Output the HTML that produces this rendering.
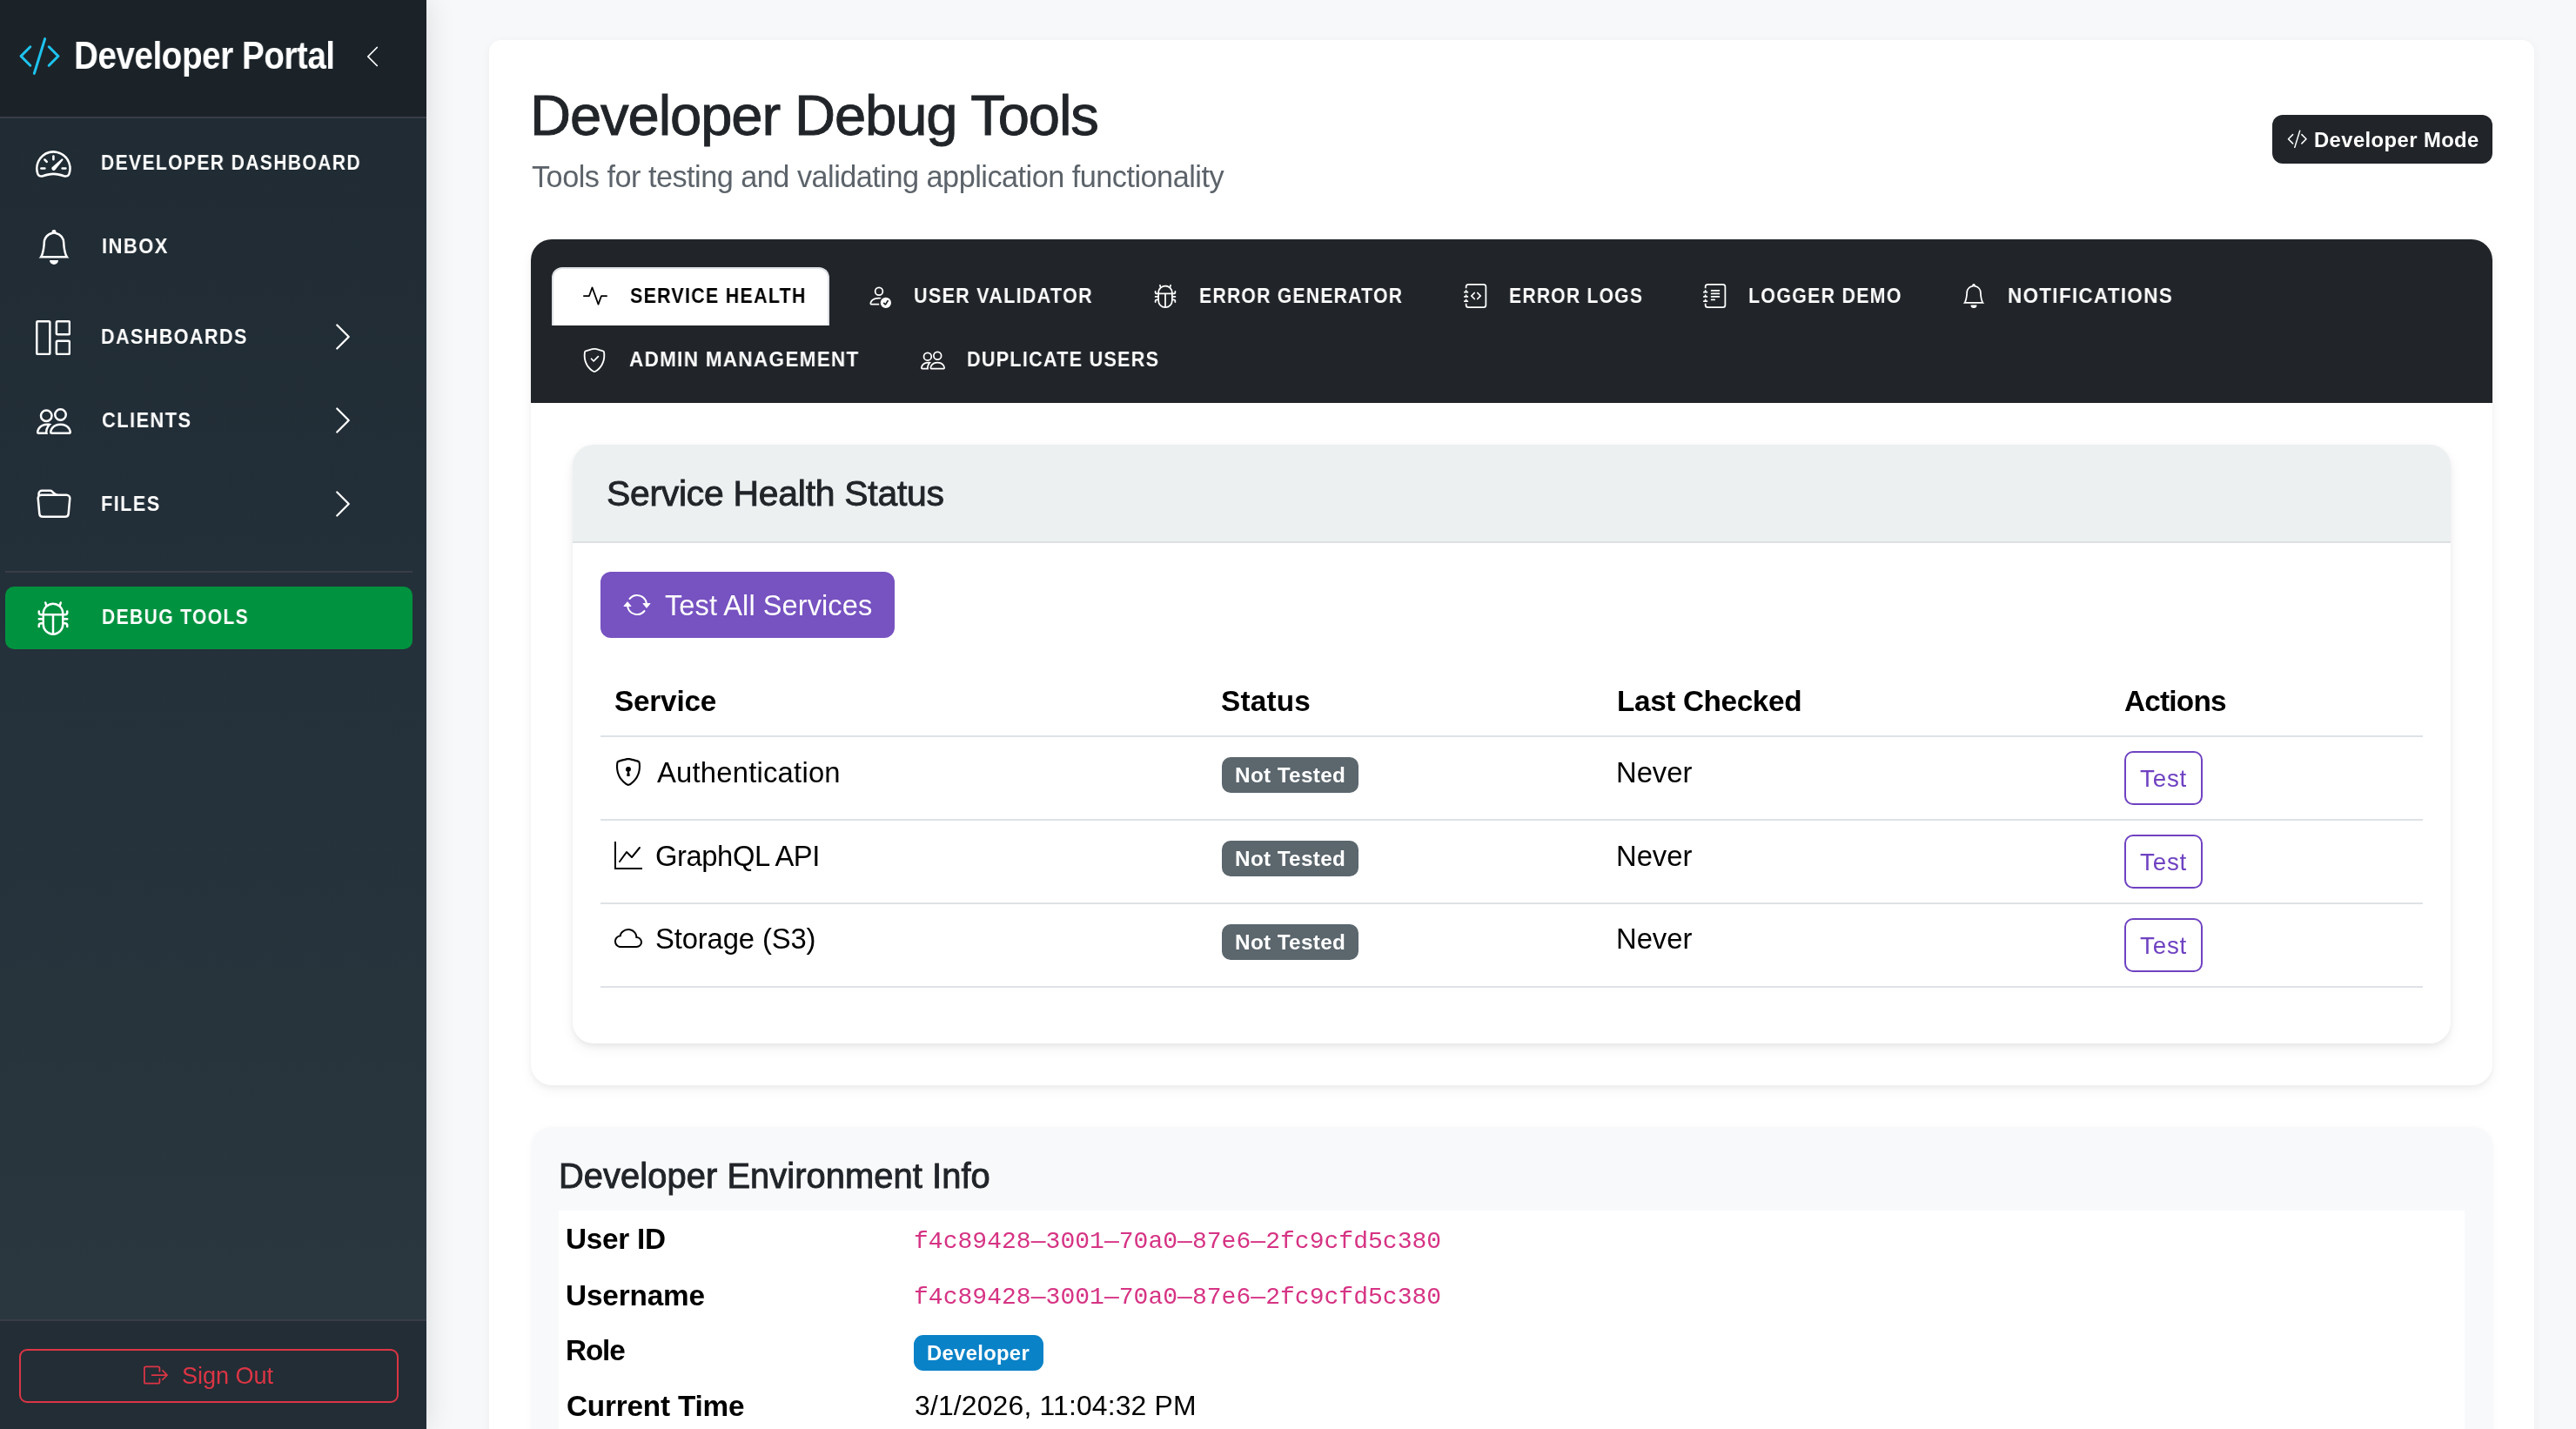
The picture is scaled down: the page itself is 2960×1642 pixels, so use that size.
<!DOCTYPE html><html><head><meta charset="utf-8"><style>
*{margin:0;padding:0;box-sizing:border-box}
html,body{width:2960px;height:1642px;overflow:hidden;background:#f7f8fa}
.t{position:absolute;white-space:nowrap;line-height:1;will-change:transform}
.ic{position:absolute;display:block}
.b{position:absolute}
@media (max-width:1600px){html{zoom:0.5}}
</style></head><body>
<div class="b" style="left:562px;top:46px;width:2350px;height:1700px;background:#fff;border-radius:14px;box-shadow:0 2px 12px rgba(0,0,0,0.045)"></div>
<div class="b" style="left:610px;top:275px;width:2254px;height:972px;background:#fff;border-radius:24px;box-shadow:0 3px 6px rgba(0,0,0,0.05),0 6px 16px rgba(0,0,0,0.04);overflow:hidden"></div>
<div class="b" style="left:610px;top:275px;width:2254px;height:188px;background:#212529;border-radius:24px 24px 0 0"></div>
<div class="b" style="left:634px;top:307px;width:319px;height:67px;background:#fff;border:2px solid #dee2e6;border-bottom:none;border-radius:12px 12px 0 0"></div>
<div class="b" style="left:658px;top:511px;width:2158px;height:688px;background:#fff;border-radius:24px;box-shadow:0 3px 6px rgba(0,0,0,0.06),0 6px 16px rgba(0,0,0,0.05);overflow:hidden"></div>
<div class="b" style="left:658px;top:511px;width:2158px;height:113px;background:#edf0f0;border-radius:24px 24px 0 0;border-bottom:2px solid #dde1e3"></div>
<div class="b" style="left:690px;top:657px;width:338px;height:76px;background:#7752c1;border-radius:12px"></div>
<div class="b" style="left:690px;top:845px;width:2094px;height:2px;background:#dee2e6"></div>
<div class="b" style="left:690px;top:941px;width:2094px;height:2px;background:#dee2e6"></div>
<div class="b" style="left:690px;top:1037px;width:2094px;height:2px;background:#dee2e6"></div>
<div class="b" style="left:690px;top:1133px;width:2094px;height:2px;background:#dee2e6"></div>
<div class="b" style="left:1404px;top:870px;width:157px;height:41px;background:#5b666d;border-radius:10px"></div>
<div class="b" style="left:2441px;top:863px;width:90px;height:62px;border:2px solid #6f42c1;border-radius:10px"></div>
<div class="b" style="left:1404px;top:966px;width:157px;height:41px;background:#5b666d;border-radius:10px"></div>
<div class="b" style="left:2441px;top:959px;width:90px;height:62px;border:2px solid #6f42c1;border-radius:10px"></div>
<div class="b" style="left:1404px;top:1062px;width:157px;height:41px;background:#5b666d;border-radius:10px"></div>
<div class="b" style="left:2441px;top:1055px;width:90px;height:62px;border:2px solid #6f42c1;border-radius:10px"></div>
<div class="b" style="left:610px;top:1295px;width:2255px;height:500px;background:#f8f9fa;border-radius:24px;box-shadow:0 0 6px rgba(0,0,0,0.03)"></div>
<div class="b" style="left:642px;top:1391px;width:2190px;height:400px;background:#fff"></div>
<div class="b" style="left:1050px;top:1534px;width:149px;height:41px;background:#0a82c8;border-radius:11px"></div>
<div class="b" style="left:2611px;top:132px;width:253px;height:56px;background:#212529;border-radius:12px"></div>
<div class="b" style="left:0px;top:0px;width:490px;height:1642px;background:linear-gradient(180deg,#1f2a31 0%,#24303a 45%,#2b373e 92%);box-shadow:3px 0 30px rgba(0,0,0,0.10)"></div>
<div class="b" style="left:0px;top:0px;width:490px;height:134px;background:#1b2329"></div>
<div class="b" style="left:0px;top:134px;width:490px;height:2px;background:#393d47"></div>
<div class="b" style="left:6px;top:656px;width:468px;height:2px;background:#393d47"></div>
<div class="b" style="left:6px;top:674px;width:468px;height:72px;background:#00923f;border-radius:10px"></div>
<div class="b" style="left:0px;top:1517px;width:490px;height:125px;background:#232d35"></div>
<div class="b" style="left:0px;top:1516px;width:490px;height:2px;background:#393d47"></div>
<div class="b" style="left:22px;top:1550px;width:436px;height:62px;border:2px solid #dc3545;border-radius:9px"></div>
<svg class="ic" style="left:21.2px;top:39.5px;width:49px;height:49px" viewBox="0 0 16 16" fill="#1ec3ee"><path d="M10.478 1.647a.5.5 0 1 0-.956-.294l-4 13a.5.5 0 0 0 .956.294zM4.854 4.146a.5.5 0 0 1 0 .708L1.707 8l3.147 3.146a.5.5 0 0 1-.708.708l-3.5-3.5a.5.5 0 0 1 0-.708l3.5-3.5a.5.5 0 0 1 .708 0m6.292 0a.5.5 0 0 0 0 .708L14.293 8l-3.147 3.146a.5.5 0 0 0 .708.708l3.5-3.5a.5.5 0 0 0 0-.708l-3.5-3.5a.5.5 0 0 0-.708 0"/></svg>
<svg class="ic" style="left:414.0px;top:51.0px;width:28px;height:28px" viewBox="0 0 16 16" fill="#fff"><path fill-rule="evenodd" d="M11.354 1.646a.5.5 0 0 1 0 .708L5.707 8l5.647 5.646a.5.5 0 0 1-.708.708l-6-6a.5.5 0 0 1 0-.708l6-6a.5.5 0 0 1 .708 0"/></svg>
<svg class="ic" style="left:41.2px;top:167.8px;width:40.8px;height:40.8px" viewBox="0 0 16 16" fill="#fff"><path d="M8 4a.5.5 0 0 1 .5.5V6a.5.5 0 0 1-1 0V4.5A.5.5 0 0 1 8 4M3.732 5.732a.5.5 0 0 1 .707 0l.915.914a.5.5 0 1 1-.708.708l-.914-.915a.5.5 0 0 1 0-.707M2 10a.5.5 0 0 1 .5-.5h1.586a.5.5 0 0 1 0 1H2.5A.5.5 0 0 1 2 10m9.5 0a.5.5 0 0 1 .5-.5h1.5a.5.5 0 0 1 0 1H12a.5.5 0 0 1-.5-.5m.754-4.246a.39.39 0 0 0-.527-.02L7.547 9.31a.91.91 0 1 0 1.302 1.258l3.434-4.297a.39.39 0 0 0-.029-.518z"/><path fill-rule="evenodd" d="M0 10a8 8 0 1 1 15.547 2.661c-.442 1.253-1.845 1.602-2.932 1.25C11.309 13.488 9.475 13 8 13c-1.474 0-3.31.488-4.615.911-1.087.352-2.49.003-2.932-1.25A8 8 0 0 1 0 10m8-7a7 7 0 0 0-6.603 9.329c.203.575.923.876 1.68.63C4.397 12.533 6.358 12 8 12s3.604.532 4.923.96c.757.245 1.477-.056 1.68-.631A7 7 0 0 0 8 3"/></svg>
<svg class="ic" style="left:42.0px;top:264.0px;width:40px;height:40px" viewBox="0 0 16 16" fill="#fff"><path d="M8 16a2 2 0 0 0 2-2H6a2 2 0 0 0 2 2M8 1.918l-.797.161A4 4 0 0 0 4 6c0 .628-.134 2.197-.459 3.742-.16.767-.376 1.566-.663 2.258h10.244c-.287-.692-.502-1.49-.663-2.258C12.134 8.197 12 6.628 12 6a4 4 0 0 0-3.203-3.92zM14.22 12c.223.447.481.801.78 1H1c.299-.199.557-.553.78-1C2.68 10.2 3 6.88 3 6c0-2.42 1.72-4.44 4.005-4.901a1 1 0 1 1 1.99 0A5 5 0 0 1 13 6c0 .88.32 4.2 1.22 6"/></svg>
<svg class="ic" style="left:41.3px;top:367.8px;width:40.2px;height:40.2px" viewBox="0 0 16 16" fill="#fff"><path d="M6 1H1v14h5zm9 0h-5v5h5zm0 9v5h-5v-5zM0 1a1 1 0 0 1 1-1h5a1 1 0 0 1 1 1v14a1 1 0 0 1-1 1H1a1 1 0 0 1-1-1zm9 0a1 1 0 0 1 1-1h5a1 1 0 0 1 1 1v5a1 1 0 0 1-1 1h-5a1 1 0 0 1-1-1zm1 8a1 1 0 0 0-1 1v5a1 1 0 0 0 1 1h5a1 1 0 0 0 1-1v-5a1 1 0 0 0-1-1z"/></svg>
<svg class="ic" style="left:41.8px;top:464.2px;width:40px;height:40px" viewBox="0 0 16 16" fill="#fff"><path d="M15 14s1 0 1-1-1-4-5-4-5 3-5 4 1 1 1 1zm-7.978-1L7 12.996c.001-.264.167-1.03.76-1.72C8.312 10.629 9.282 10 11 10c1.717 0 2.687.63 3.24 1.276.593.69.758 1.457.76 1.72l-.008.002-.014.002zM11 7a2 2 0 1 0 0-4 2 2 0 0 0 0 4m3-2a3 3 0 1 1-6 0 3 3 0 0 1 6 0M6.936 9.28a6 6 0 0 0-1.23-.247A7 7 0 0 0 5 9c-4 0-5 3-5 4q0 1 1 1h4.216A2.24 2.24 0 0 1 5 13c0-1.01.377-2.042 1.09-2.904.243-.294.526-.569.846-.816M4.92 10A5.5 5.5 0 0 0 4 13H1c0-.26.164-1.03.76-1.724.545-.636 1.492-1.256 3.16-1.275ZM1.5 5.5a3 3 0 1 1 6 0 3 3 0 0 1-6 0m3-2a2 2 0 1 0 0 4 2 2 0 0 0 0-4"/></svg>
<svg class="ic" style="left:41.7px;top:560.0px;width:40px;height:40px" viewBox="0 0 16 16" fill="#fff"><path d="M.54 3.87.5 3a2 2 0 0 1 2-2h3.672a2 2 0 0 1 1.414.586l.828.828A2 2 0 0 0 9.828 3h3.982a2 2 0 0 1 1.992 2.181l-.637 7A2 2 0 0 1 13.174 14H2.826a2 2 0 0 1-1.991-1.819l-.637-7a2 2 0 0 1 .342-1.31zM2.19 4a1 1 0 0 0-.996 1.09l.637 7a1 1 0 0 0 .995.91h10.348a1 1 0 0 0 .995-.91l.637-7A1 1 0 0 0 13.81 4zm4.69-1.707A1 1 0 0 0 6.172 2H2.5a1 1 0 0 0-1 .981l.006.139q.323-.119.684-.12h5.396z"/></svg>
<svg class="ic" style="left:41.3px;top:690.0px;width:40px;height:40px" viewBox="0 0 16 16" fill="#fff"><path d="M4.355.522a.5.5 0 0 1 .623.333l.291.956A5 5 0 0 1 8 1c1.007 0 1.946.298 2.731.811l.29-.956a.5.5 0 1 1 .957.29l-.41 1.352A5 5 0 0 1 13 6h.5a.5.5 0 0 0 .5-.5V5a.5.5 0 0 1 1 0v.5A1.5 1.5 0 0 1 13.5 7H13v1h1.5a.5.5 0 0 1 0 1H13v1h.5a1.5 1.5 0 0 1 1.5 1.5v.5a.5.5 0 1 1-1 0v-.5a.5.5 0 0 0-.5-.5H13a5 5 0 0 1-10 0h-.5a.5.5 0 0 0-.5.5v.5a.5.5 0 1 1-1 0v-.5A1.5 1.5 0 0 1 2.5 10H3V9H1.5a.5.5 0 0 1 0-1H3V7h-.5A1.5 1.5 0 0 1 1 5.5V5a.5.5 0 0 1 1 0v.5a.5.5 0 0 0 .5.5H3c0-1.364.547-2.601 1.432-3.503l-.41-1.352a.5.5 0 0 1 .333-.623M4 7v4a4 4 0 0 0 3.5 3.97V7zm4.5 0v7.97A4 4 0 0 0 12 11V7zM12 6a4 4 0 0 0-1.334-2.982A3.98 3.98 0 0 0 8 2a3.98 3.98 0 0 0-2.667 1.018A4 4 0 0 0 4 6z"/></svg>
<svg class="ic" style="left:375.7px;top:369.4px;width:36px;height:36px" viewBox="0 0 16 16" fill="#fff"><path fill-rule="evenodd" d="M4.646 1.646a.5.5 0 0 1 .708 0l6 6a.5.5 0 0 1 0 .708l-6 6a.5.5 0 0 1-.708-.708L10.293 8 4.646 2.354a.5.5 0 0 1 0-.708"/></svg>
<svg class="ic" style="left:375.7px;top:465.4px;width:36px;height:36px" viewBox="0 0 16 16" fill="#fff"><path fill-rule="evenodd" d="M4.646 1.646a.5.5 0 0 1 .708 0l6 6a.5.5 0 0 1 0 .708l-6 6a.5.5 0 0 1-.708-.708L10.293 8 4.646 2.354a.5.5 0 0 1 0-.708"/></svg>
<svg class="ic" style="left:375.7px;top:561.0px;width:36px;height:36px" viewBox="0 0 16 16" fill="#fff"><path fill-rule="evenodd" d="M4.646 1.646a.5.5 0 0 1 .708 0l6 6a.5.5 0 0 1 0 .708l-6 6a.5.5 0 0 1-.708-.708L10.293 8 4.646 2.354a.5.5 0 0 1 0-.708"/></svg>
<svg class="ic" style="left:165.0px;top:1566.0px;width:28px;height:28px" viewBox="0 0 16 16" fill="#dc3545"><path fill-rule="evenodd" d="M10 12.5a.5.5 0 0 1-.5.5h-8a.5.5 0 0 1-.5-.5v-9a.5.5 0 0 1 .5-.5h8a.5.5 0 0 1 .5.5v2a.5.5 0 0 0 1 0v-2A1.5 1.5 0 0 0 9.5 2h-8A1.5 1.5 0 0 0 0 3.5v9A1.5 1.5 0 0 0 1.5 14h8a1.5 1.5 0 0 0 1.5-1.5v-2a.5.5 0 0 0-1 0z"/><path fill-rule="evenodd" d="M15.854 8.354a.5.5 0 0 0 0-.708l-3-3a.5.5 0 0 0-.708.708L14.293 7.5H5.5a.5.5 0 0 0 0 1h8.793l-2.147 2.146a.5.5 0 0 0 .708.708z"/></svg>
<svg class="ic" style="left:669.6px;top:326.0px;width:28px;height:28px" viewBox="0 0 16 16" fill="#000"><path fill-rule="evenodd" d="M6 2a.5.5 0 0 1 .47.33L10 12.036l1.53-4.208A.5.5 0 0 1 12 7.5h3.5a.5.5 0 0 1 0 1h-3.15l-1.88 5.17a.5.5 0 0 1-.94 0L6 3.964 4.47 8.171A.5.5 0 0 1 4 8.5H.5a.5.5 0 0 1 0-1h3.15l1.88-5.17A.5.5 0 0 1 6 2"/></svg>
<svg class="ic" style="left:996.0px;top:326.0px;width:28px;height:28px" viewBox="0 0 16 16" fill="#fff"><path d="M12.5 16a3.5 3.5 0 1 0 0-7 3.5 3.5 0 0 0 0 7m1.679-4.493-1.335 2.226a.75.75 0 0 1-1.174.144l-.774-.773a.5.5 0 0 1 .708-.708l.547.548 1.170-1.951a.5.5 0 1 1 .858.514M11 5a3 3 0 1 1-6 0 3 3 0 0 1 6 0M8 7a2 2 0 1 0 0-4 2 2 0 0 0 0 4"/><path d="M8.256 14a4.500 4.500 0 0 1-.229-1.004H3c.001-.246.154-.986.832-1.664C4.484 10.680 5.711 10 8 10q.39 0 .74.025c.226-.341.496-.65.804-.918Q8.844 9.002 8 9c-5 0-6 3-6 4s1 1 1 1z"/></svg>
<svg class="ic" style="left:1324.9px;top:326.0px;width:28px;height:28px" viewBox="0 0 16 16" fill="#fff"><path d="M4.355.522a.5.5 0 0 1 .623.333l.291.956A5 5 0 0 1 8 1c1.007 0 1.946.298 2.731.811l.29-.956a.5.5 0 1 1 .957.29l-.41 1.352A5 5 0 0 1 13 6h.5a.5.5 0 0 0 .5-.5V5a.5.5 0 0 1 1 0v.5A1.5 1.5 0 0 1 13.5 7H13v1h1.5a.5.5 0 0 1 0 1H13v1h.5a1.5 1.5 0 0 1 1.5 1.5v.5a.5.5 0 1 1-1 0v-.5a.5.5 0 0 0-.5-.5H13a5 5 0 0 1-10 0h-.5a.5.5 0 0 0-.5.5v.5a.5.5 0 1 1-1 0v-.5A1.5 1.5 0 0 1 2.5 10H3V9H1.5a.5.5 0 0 1 0-1H3V7h-.5A1.5 1.5 0 0 1 1 5.5V5a.5.5 0 0 1 1 0v.5a.5.5 0 0 0 .5.5H3c0-1.364.547-2.601 1.432-3.503l-.41-1.352a.5.5 0 0 1 .333-.623M4 7v4a4 4 0 0 0 3.5 3.97V7zm4.5 0v7.97A4 4 0 0 0 12 11V7zM12 6a4 4 0 0 0-1.334-2.982A3.98 3.98 0 0 0 8 2a3.98 3.98 0 0 0-2.667 1.018A4 4 0 0 0 4 6z"/></svg>
<svg class="ic" style="left:1681.5px;top:326.0px;width:28px;height:28px" viewBox="0 0 16 16" fill="#fff"><path fill-rule="evenodd" d="M8.646 5.646a.5.5 0 0 1 .708 0l2 2a.5.5 0 0 1 0 .708l-2 2a.5.5 0 0 1-.708-.708L10.293 8 8.646 6.354a.5.5 0 0 1 0-.708m-1.292 0a.5.5 0 0 0-.708 0l-2 2a.5.5 0 0 0 0 .708l2 2a.5.5 0 0 0 .708-.708L5.707 8l1.647-1.646a.5.5 0 0 0 0-.708"/><path d="M3 0h10a2 2 0 0 1 2 2v12a2 2 0 0 1-2 2H3a2 2 0 0 1-2-2v-1h1v1a1 1 0 0 0 1 1h10a1 1 0 0 0 1-1V2a1 1 0 0 0-1-1H3a1 1 0 0 0-1 1v1H1V2a2 2 0 0 1 2-2"/><path d="M1 5v-.5a.5.5 0 0 1 1 0V5h.5a.5.5 0 0 1 0 1h-2a.5.5 0 0 1 0-1zm0 3v-.5a.5.5 0 0 1 1 0V8h.5a.5.5 0 0 1 0 1h-2a.5.5 0 0 1 0-1zm0 3v-.5a.5.5 0 0 1 1 0v.5h.5a.5.5 0 0 1 0 1h-2a.5.5 0 0 1 0-1z"/></svg>
<svg class="ic" style="left:1956.5px;top:326.0px;width:28px;height:28px" viewBox="0 0 16 16" fill="#fff"><path d="M5 10.5a.5.5 0 0 1 .5-.5h2a.5.5 0 0 1 0 1h-2a.5.5 0 0 1-.5-.5m0-2a.5.5 0 0 1 .5-.5h5a.5.5 0 0 1 0 1h-5a.5.5 0 0 1-.5-.5m0-2a.5.5 0 0 1 .5-.5h5a.5.5 0 0 1 0 1h-5a.5.5 0 0 1-.5-.5m0-2a.5.5 0 0 1 .5-.5h5a.5.5 0 0 1 0 1h-5a.5.5 0 0 1-.5-.5"/><path d="M3 0h10a2 2 0 0 1 2 2v12a2 2 0 0 1-2 2H3a2 2 0 0 1-2-2v-1h1v1a1 1 0 0 0 1 1h10a1 1 0 0 0 1-1V2a1 1 0 0 0-1-1H3a1 1 0 0 0-1 1v1H1V2a2 2 0 0 1 2-2"/><path d="M1 5v-.5a.5.5 0 0 1 1 0V5h.5a.5.5 0 0 1 0 1h-2a.5.5 0 0 1 0-1zm0 3v-.5a.5.5 0 0 1 1 0V8h.5a.5.5 0 0 1 0 1h-2a.5.5 0 0 1 0-1zm0 3v-.5a.5.5 0 0 1 1 0v.5h.5a.5.5 0 0 1 0 1h-2a.5.5 0 0 1 0-1z"/></svg>
<svg class="ic" style="left:2254.0px;top:326.0px;width:28px;height:28px" viewBox="0 0 16 16" fill="#fff"><path d="M8 16a2 2 0 0 0 2-2H6a2 2 0 0 0 2 2M8 1.918l-.797.161A4 4 0 0 0 4 6c0 .628-.134 2.197-.459 3.742-.16.767-.376 1.566-.663 2.258h10.244c-.287-.692-.502-1.49-.663-2.258C12.134 8.197 12 6.628 12 6a4 4 0 0 0-3.203-3.92zM14.22 12c.223.447.481.801.78 1H1c.299-.199.557-.553.78-1C2.68 10.2 3 6.88 3 6c0-2.42 1.72-4.44 4.005-4.901a1 1 0 1 1 1.99 0A5 5 0 0 1 13 6c0 .88.32 4.2 1.22 6"/></svg>
<svg class="ic" style="left:669.0px;top:400.0px;width:28px;height:28px" viewBox="0 0 16 16" fill="#fff"><path d="M5.338 1.59a61 61 0 0 0-2.837.856.48.48 0 0 0-.328.39c-.554 4.157.726 7.19 2.253 9.188a10.700 10.700 0 0 0 2.287 2.233c.346.244.652.42.893.533q.18.085.293.118a1 1 0 0 0 .101.025 1 1 0 0 0 .1-.025q.114-.034.294-.118c.24-.113.547-.29.893-.533a10.700 10.700 0 0 0 2.287-2.233c1.527-1.997 2.807-5.031 2.253-9.188a.48.48 0 0 0-.328-.39c-.651-.213-1.75-.56-2.837-.855C9.552 1.290 8.531 1.067 8 1.067c-.53 0-1.552.223-2.662.524zM5.072.56C6.157.265 7.31 0 8 0s1.843.265 2.928.56c1.11.3 2.229.655 2.887.87a1.54 1.54 0 0 1 1.044 1.262c.596 4.477-.787 7.795-2.465 9.99a11.800 11.800 0 0 1-2.517 2.453 7 7 0 0 1-1.048.625c-.28.132-.581.24-.829.24s-.548-.108-.829-.24a7 7 0 0 1-1.048-.625 11.800 11.800 0 0 1-2.517-2.453C1.928 10.487.545 7.169 1.141 2.692A1.54 1.54 0 0 1 2.185 1.43 63 63 0 0 1 5.072.56"/><path d="M10.854 5.146a.5.5 0 0 1 0 .708l-3 3a.5.5 0 0 1-.708 0l-1.5-1.5a.5.5 0 1 1 .708-.708L7.5 7.793l2.646-2.647a.5.5 0 0 1 .708 0"/></svg>
<svg class="ic" style="left:1058.0px;top:400.0px;width:28px;height:28px" viewBox="0 0 16 16" fill="#fff"><path d="M15 14s1 0 1-1-1-4-5-4-5 3-5 4 1 1 1 1zm-7.978-1L7 12.996c.001-.264.167-1.03.76-1.72C8.312 10.629 9.282 10 11 10c1.717 0 2.687.63 3.24 1.276.593.69.758 1.457.76 1.72l-.008.002-.014.002zM11 7a2 2 0 1 0 0-4 2 2 0 0 0 0 4m3-2a3 3 0 1 1-6 0 3 3 0 0 1 6 0M6.936 9.28a6 6 0 0 0-1.23-.247A7 7 0 0 0 5 9c-4 0-5 3-5 4q0 1 1 1h4.216A2.24 2.24 0 0 1 5 13c0-1.01.377-2.042 1.09-2.904.243-.294.526-.569.846-.816M4.92 10A5.5 5.5 0 0 0 4 13H1c0-.26.164-1.03.76-1.724.545-.636 1.492-1.256 3.16-1.275ZM1.5 5.5a3 3 0 1 1 6 0 3 3 0 0 1-6 0m3-2a2 2 0 1 0 0 4 2 2 0 0 0 0-4"/></svg>
<svg class="ic" style="left:716.0px;top:679.0px;width:32px;height:32px" viewBox="0 0 16 16" fill="#fff"><path d="M11.534 7h3.932a.25.25 0 0 1 .192.41l-1.966 2.36a.25.25 0 0 1-.384 0l-1.966-2.36a.25.25 0 0 1 .192-.41m-11 2h3.932a.25.25 0 0 0 .192-.41L2.692 6.23a.25.25 0 0 0-.384 0L.342 8.59A.25.25 0 0 0 .534 9"/><path fill-rule="evenodd" d="M8 3c-1.552 0-2.94.707-3.857 1.818a.5.5 0 1 1-.771-.636A6.002 6.002 0 0 1 13.917 7H12.9A5 5 0 0 0 8 3M3.1 9a5.002 5.002 0 0 0 8.757 2.182.5.5 0 1 1 .771.636A6.002 6.002 0 0 1 2.083 9z"/></svg>
<svg class="ic" style="left:2627.8px;top:148.0px;width:23.5px;height:23.5px" viewBox="0 0 16 16" fill="#fff"><path d="M10.478 1.647a.5.5 0 1 0-.956-.294l-4 13a.5.5 0 0 0 .956.294zM4.854 4.146a.5.5 0 0 1 0 .708L1.707 8l3.147 3.146a.5.5 0 0 1-.708.708l-3.5-3.5a.5.5 0 0 1 0-.708l3.5-3.5a.5.5 0 0 1 .708 0m6.292 0a.5.5 0 0 0 0 .708L14.293 8l-3.147 3.146a.5.5 0 0 0 .708.708l3.5-3.5a.5.5 0 0 0 0-.708l-3.5-3.5a.5.5 0 0 0-.708 0"/></svg>
<svg class="ic" style="left:705.8px;top:871.0px;width:32px;height:32px" viewBox="0 0 16 16" fill="#000"><path d="M5.338 1.59a61 61 0 0 0-2.837.856.48.48 0 0 0-.328.39c-.554 4.157.726 7.19 2.253 9.188a10.700 10.700 0 0 0 2.287 2.233c.346.244.652.42.893.533q.18.085.293.118a1 1 0 0 0 .101.025 1 1 0 0 0 .1-.025q.114-.034.294-.118c.24-.113.547-.29.893-.533a10.700 10.700 0 0 0 2.287-2.233c1.527-1.997 2.807-5.031 2.253-9.188a.48.48 0 0 0-.328-.39c-.651-.213-1.75-.56-2.837-.855C9.552 1.290 8.531 1.067 8 1.067c-.53 0-1.552.223-2.662.524zM5.072.56C6.157.265 7.31 0 8 0s1.843.265 2.928.56c1.11.3 2.229.655 2.887.87a1.54 1.54 0 0 1 1.044 1.262c.596 4.477-.787 7.795-2.465 9.99a11.800 11.800 0 0 1-2.517 2.453 7 7 0 0 1-1.048.625c-.28.132-.581.24-.829.24s-.548-.108-.829-.24a7 7 0 0 1-1.048-.625 11.800 11.800 0 0 1-2.517-2.453C1.928 10.487.545 7.169 1.141 2.692A1.54 1.54 0 0 1 2.185 1.43 63 63 0 0 1 5.072.56"/><path d="M9.500 6.500a1.500 1.500 0 0 1-1 1.415l.385 1.990a.5.5 0 0 1-.491.595h-.788a.5.5 0 0 1-.49-.595l.384-1.990a1.500 1.500 0 1 1 2-1.415"/></svg>
<svg class="ic" style="left:706.0px;top:967.0px;width:32px;height:32px" viewBox="0 0 16 16" fill="#000"><path fill-rule="evenodd" d="M0 0h1v15h15v1H0zm14.817 3.113a.5.5 0 0 1 .07.704l-4.5 5.5a.5.5 0 0 1-.74.037L7.06 6.767l-3.656 5.027a.5.5 0 0 1-.808-.588l4-5.5a.5.5 0 0 1 .758-.06l2.609 2.610 4.150-5.073a.5.5 0 0 1 .704-.07"/></svg>
<svg class="ic" style="left:706.0px;top:1063.0px;width:32px;height:32px" viewBox="0 0 16 16" fill="#000"><path d="M4.406 3.342A5.530 5.530 0 0 1 8 2c2.690 0 4.923 2 5.166 4.579C14.758 6.804 16 8.137 16 9.773 16 11.569 14.502 13 12.687 13H3.781C1.708 13 0 11.366 0 9.318c0-1.763 1.266-3.223 2.942-3.593.143-.863.698-1.723 1.464-2.383m.653.757c-.757.653-1.153 1.440-1.153 2.056v.448l-.445.049C2.064 6.805 1 7.952 1 9.318 1 10.785 2.230 12 3.781 12h8.906C13.980 12 15 10.988 15 9.773c0-1.216-1.020-2.228-2.313-2.228h-.5v-.5C12.188 4.825 10.328 3 8 3a4.530 4.530 0 0 0-2.941 1.100z"/></svg>
<div class="t" style="left:85.36px;top:42.09px;font-family:'Liberation Sans';font-weight:700;font-size:43.90px;letter-spacing:-0.500px;color:#ffffff;transform:scaleX(0.8793);transform-origin:0 0;">Developer Portal</div>
<div class="t" style="left:116.05px;top:174.88px;font-family:'Liberation Sans';font-weight:700;font-size:24.00px;letter-spacing:1.600px;color:#ffffff;transform:scaleX(0.8765);transform-origin:0 0;">DEVELOPER DASHBOARD</div>
<div class="t" style="left:116.77px;top:270.60px;font-family:'Liberation Sans';font-weight:700;font-size:24.00px;letter-spacing:1.600px;color:#ffffff;transform:scaleX(0.9129);transform-origin:0 0;">INBOX</div>
<div class="t" style="left:116.41px;top:374.60px;font-family:'Liberation Sans';font-weight:700;font-size:24.00px;letter-spacing:1.600px;color:#ffffff;transform:scaleX(0.8975);transform-origin:0 0;">DASHBOARDS</div>
<div class="t" style="left:117.29px;top:470.60px;font-family:'Liberation Sans';font-weight:700;font-size:24.00px;letter-spacing:1.600px;color:#ffffff;transform:scaleX(0.9087);transform-origin:0 0;">CLIENTS</div>
<div class="t" style="left:116.40px;top:566.60px;font-family:'Liberation Sans';font-weight:700;font-size:24.00px;letter-spacing:1.600px;color:#ffffff;transform:scaleX(0.9020);transform-origin:0 0;">FILES</div>
<div class="t" style="left:117.05px;top:696.80px;font-family:'Liberation Sans';font-weight:700;font-size:24.00px;letter-spacing:1.600px;color:#ffffff;transform:scaleX(0.8757);transform-origin:0 0;">DEBUG TOOLS</div>
<div class="t" style="left:209.20px;top:1566.76px;font-family:'Liberation Sans';font-weight:400;font-size:27.10px;letter-spacing:-0.043px;color:#dc3545;">Sign Out</div>
<div class="t" style="left:609.20px;top:100.28px;font-family:'Liberation Sans';font-weight:400;font-size:65.20px;letter-spacing:-1.130px;color:#212529;-webkit-text-stroke:0.9px #212529;">Developer Debug Tools</div>
<div class="t" style="left:611.00px;top:186.25px;font-family:'Liberation Sans';font-weight:400;font-size:34.30px;letter-spacing:-0.526px;color:#5c636a;">Tools for testing and validating application functionality</div>
<div class="t" style="left:2658.60px;top:148.87px;font-family:'Liberation Sans';font-weight:700;font-size:23.80px;letter-spacing:0.423px;color:#ffffff;">Developer Mode</div>
<div class="t" style="left:724.11px;top:328.12px;font-family:'Liberation Sans';font-weight:700;font-size:24.00px;letter-spacing:1.400px;color:#000;transform:scaleX(0.8938);transform-origin:0 0;">SERVICE HEALTH</div>
<div class="t" style="left:1050.40px;top:328.12px;font-family:'Liberation Sans';font-weight:700;font-size:24.00px;letter-spacing:1.400px;color:#ffffff;transform:scaleX(0.8992);transform-origin:0 0;">USER VALIDATOR</div>
<div class="t" style="left:1378.44px;top:328.12px;font-family:'Liberation Sans';font-weight:700;font-size:24.00px;letter-spacing:1.400px;color:#ffffff;transform:scaleX(0.8823);transform-origin:0 0;">ERROR GENERATOR</div>
<div class="t" style="left:1734.24px;top:328.12px;font-family:'Liberation Sans';font-weight:700;font-size:24.00px;letter-spacing:1.400px;color:#ffffff;transform:scaleX(0.8792);transform-origin:0 0;">ERROR LOGS</div>
<div class="t" style="left:2009.22px;top:328.12px;font-family:'Liberation Sans';font-weight:700;font-size:24.00px;letter-spacing:1.400px;color:#ffffff;transform:scaleX(0.8918);transform-origin:0 0;">LOGGER DEMO</div>
<div class="t" style="left:2307.13px;top:328.12px;font-family:'Liberation Sans';font-weight:700;font-size:24.00px;letter-spacing:1.400px;color:#ffffff;transform:scaleX(0.9356);transform-origin:0 0;">NOTIFICATIONS</div>
<div class="t" style="left:723.26px;top:400.60px;font-family:'Liberation Sans';font-weight:700;font-size:24.00px;letter-spacing:1.400px;color:#ffffff;transform:scaleX(0.9371);transform-origin:0 0;">ADMIN MANAGEMENT</div>
<div class="t" style="left:1111.00px;top:400.60px;font-family:'Liberation Sans';font-weight:700;font-size:24.00px;letter-spacing:1.400px;color:#ffffff;transform:scaleX(0.8998);transform-origin:0 0;">DUPLICATE USERS</div>
<div class="t" style="left:697.30px;top:546.98px;font-family:'Liberation Sans';font-weight:400;font-size:40.90px;letter-spacing:-0.265px;color:#212529;-webkit-text-stroke:0.9px #212529;">Service Health Status</div>
<div class="t" style="left:764.30px;top:680.39px;font-family:'Liberation Sans';font-weight:400;font-size:32.60px;letter-spacing:0.062px;color:#ffffff;">Test All Services</div>
<div class="t" style="left:706.40px;top:789.48px;font-family:'Liberation Sans';font-weight:700;font-size:33.30px;letter-spacing:-0.200px;color:#000;">Service</div>
<div class="t" style="left:1403.40px;top:789.48px;font-family:'Liberation Sans';font-weight:700;font-size:33.30px;letter-spacing:0.220px;color:#000;">Status</div>
<div class="t" style="left:1857.80px;top:789.48px;font-family:'Liberation Sans';font-weight:700;font-size:33.30px;letter-spacing:-0.364px;color:#000;">Last Checked</div>
<div class="t" style="left:2440.60px;top:789.48px;font-family:'Liberation Sans';font-weight:700;font-size:33.30px;letter-spacing:-0.767px;color:#000;">Actions</div>
<div class="t" style="left:755.00px;top:871.92px;font-family:'Liberation Sans';font-weight:400;font-size:32.80px;letter-spacing:0.208px;color:#000;">Authentication</div>
<div class="t" style="left:1856.80px;top:871.92px;font-family:'Liberation Sans';font-weight:400;font-size:32.80px;letter-spacing:-0.025px;color:#000;">Never</div>
<div class="t" style="left:1418.80px;top:879.41px;font-family:'Liberation Sans';font-weight:700;font-size:24.30px;letter-spacing:0.356px;color:#ffffff;">Not Tested</div>
<div class="t" style="left:2458.70px;top:881.25px;font-family:'Liberation Sans';font-weight:400;font-size:27.70px;letter-spacing:0.833px;color:#6f42c1;">Test</div>
<div class="t" style="left:753.40px;top:968.22px;font-family:'Liberation Sans';font-weight:400;font-size:32.80px;letter-spacing:-0.450px;color:#000;">GraphQL API</div>
<div class="t" style="left:1856.80px;top:968.44px;font-family:'Liberation Sans';font-weight:400;font-size:32.80px;letter-spacing:-0.025px;color:#000;">Never</div>
<div class="t" style="left:1418.80px;top:975.41px;font-family:'Liberation Sans';font-weight:700;font-size:24.30px;letter-spacing:0.356px;color:#ffffff;">Not Tested</div>
<div class="t" style="left:2458.70px;top:977.25px;font-family:'Liberation Sans';font-weight:400;font-size:27.70px;letter-spacing:0.833px;color:#6f42c1;">Test</div>
<div class="t" style="left:753.40px;top:1063.22px;font-family:'Liberation Sans';font-weight:400;font-size:32.80px;letter-spacing:-0.136px;color:#000;">Storage (S3)</div>
<div class="t" style="left:1856.80px;top:1063.42px;font-family:'Liberation Sans';font-weight:400;font-size:32.80px;letter-spacing:-0.025px;color:#000;">Never</div>
<div class="t" style="left:1418.80px;top:1071.40px;font-family:'Liberation Sans';font-weight:700;font-size:24.30px;letter-spacing:0.356px;color:#ffffff;">Not Tested</div>
<div class="t" style="left:2458.70px;top:1073.25px;font-family:'Liberation Sans';font-weight:400;font-size:27.70px;letter-spacing:0.833px;color:#6f42c1;">Test</div>
<div class="t" style="left:641.70px;top:1332.49px;font-family:'Liberation Sans';font-weight:400;font-size:39.90px;letter-spacing:0.052px;color:#212529;-webkit-text-stroke:0.9px #212529;">Developer Environment Info</div>
<div class="t" style="left:649.50px;top:1407.39px;font-family:'Liberation Sans';font-weight:700;font-size:33.30px;letter-spacing:-0.250px;color:#000;">User ID</div>
<div class="t" style="left:649.50px;top:1471.74px;font-family:'Liberation Sans';font-weight:700;font-size:33.30px;letter-spacing:-0.143px;color:#000;">Username</div>
<div class="t" style="left:649.50px;top:1535.21px;font-family:'Liberation Sans';font-weight:700;font-size:33.30px;letter-spacing:-1.165px;color:#000;">Role</div>
<div class="t" style="left:650.50px;top:1599.47px;font-family:'Liberation Sans';font-weight:700;font-size:33.30px;letter-spacing:-0.191px;color:#000;">Current Time</div>
<div class="t" style="left:1050.20px;top:1413.46px;font-family:'Liberation Mono';font-weight:400;font-size:28.00px;letter-spacing:0.036px;color:#d63384;">f4c89428&#8212;3001&#8212;70a0&#8212;87e6&#8212;2fc9cfd5c380</div>
<div class="t" style="left:1050.20px;top:1477.42px;font-family:'Liberation Mono';font-weight:400;font-size:28.00px;letter-spacing:0.036px;color:#d63384;">f4c89428&#8212;3001&#8212;70a0&#8212;87e6&#8212;2fc9cfd5c380</div>
<div class="t" style="left:1064.80px;top:1542.57px;font-family:'Liberation Sans';font-weight:700;font-size:23.80px;letter-spacing:0.325px;color:#ffffff;">Developer</div>
<div class="t" style="left:1051.20px;top:1600.09px;font-family:'Liberation Sans';font-weight:400;font-size:31.90px;letter-spacing:0.160px;color:#000;">3/1/2026, 11:04:32 PM</div>
</body></html>
